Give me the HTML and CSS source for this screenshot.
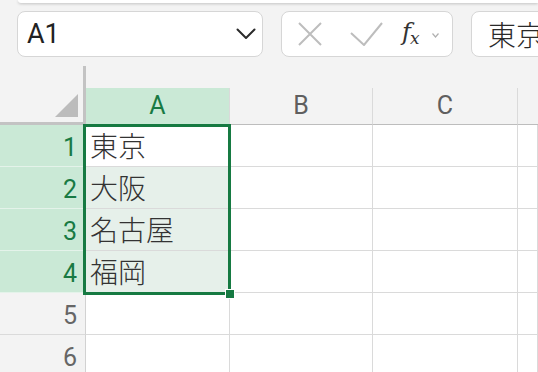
FILE: index.html
```html
<!DOCTYPE html>
<html lang="ja">
<head>
    <meta charset="UTF-8">
    <meta name="viewport" content="width=device-width, initial-scale=1.0">
    <title>Sheet</title>
    <link rel="stylesheet" href="styles.css">
</head>
<body>

<div class="topbar"></div>

<div class="toolbar">
    <div class="namebox">
        <span>A1</span>
        <svg class="chev" width="20" height="12" viewBox="0 0 20 12"><path d="M1.5 1.5 L10 10 L18.5 1.5" fill="none" stroke="#2b2b2b" stroke-width="2" stroke-linecap="round" stroke-linejoin="round"/></svg>
    </div>
    <div class="fxgroup">
        <svg width="24" height="24" viewBox="0 0 24 24"><path d="M1 1 L23 23 M23 1 L1 23" stroke="#bdbdbd" stroke-width="2" fill="none"/></svg>
        <svg width="33" height="24" viewBox="0 0 33 24"><path d="M1 11 L14 23 L32 1" stroke="#bdbdbd" stroke-width="2" fill="none"/></svg>
        <span class="fx"><i>f</i><sub>x</sub></span>
        <svg width="7" height="5" viewBox="0 0 7 5"><path d="M0.5 0.5 L3.5 4 L6.5 0.5" stroke="#b0b0b0" stroke-width="1.2" fill="none"/></svg>
    </div>
    <div class="formula">東京</div>
</div>

<div class="sheet">
    <div class="corner">
        <svg width="23" height="23" viewBox="0 0 23 23"><polygon points="23,0 23,23 0,23" fill="#bcbcbc"/></svg>
    </div>
    <div class="col sel">A</div>
    <div class="col">B</div>
    <div class="col">C</div>
    <div class="col last"></div>

    <div class="rowh sel">1</div>
    <div class="cell">東京</div>
    <div class="cell"></div>
    <div class="cell"></div>
    <div class="cell"></div>

    <div class="rowh sel">2</div>
    <div class="cell sel">大阪</div>
    <div class="cell"></div>
    <div class="cell"></div>
    <div class="cell"></div>

    <div class="rowh sel">3</div>
    <div class="cell sel">名古屋</div>
    <div class="cell"></div>
    <div class="cell"></div>
    <div class="cell"></div>

    <div class="rowh sel">4</div>
    <div class="cell sel">福岡</div>
    <div class="cell"></div>
    <div class="cell"></div>
    <div class="cell"></div>

    <div class="rowh">5</div>
    <div class="cell"></div>
    <div class="cell"></div>
    <div class="cell"></div>
    <div class="cell"></div>

    <div class="rowh">6</div>
    <div class="cell"></div>
    <div class="cell"></div>
    <div class="cell"></div>
    <div class="cell"></div>

    <div class="selection"></div>
    <div class="handle"></div>
</div>

</body>
</html>
```

FILE: styles.css
```css
body {
    margin: 0;
    background-color: #f3f3f3;
    font-family: Roboto, "Liberation Sans", sans-serif;
    overflow: hidden;
    height: 372px;
}
.topbar {
    height: 3px;
    margin-left: 18px;
    background-color: white;
    border-bottom-left-radius: 10px;
    box-shadow: 0 1px 3px rgba(0, 0, 0, 0.2);
}
.toolbar {
    display: flex;
    gap: 18px;
    padding: 8px 0 0 17px;
    height: 46px;
}
.namebox,
.fxgroup,
.formula {
    box-sizing: border-box;
    height: 46px;
    background-color: white;
    border: 1.5px solid #d6d6d6;
    border-radius: 8px;
    display: flex;
    align-items: center;
}
.namebox {
    width: 246px;
    justify-content: space-between;
    padding: 0 6px 0 9px;
    font-size: 27px;
    color: #222;
}
.fxgroup {
    width: 172px;
    padding-left: 16px;
}
.fxgroup svg:nth-child(2) {
    margin-left: 28px;
}
.fx {
    margin-left: 19px;
    font-family: "DejaVu Serif", serif;
    color: #333;
    font-size: 24px;
    line-height: 1;
    margin-top: -2px;
}
.fx sub {
    font-size: 17px;
    font-style: italic;
    vertical-align: -4px;
    margin-left: -1px;
}
.fxgroup svg:last-child {
    margin-left: 13px;
    margin-top: 2px;
}
.formula {
    flex: 1;
    margin-right: -30px;
    padding-left: 16px;
    font-family: "Noto Sans CJK JP", sans-serif;
    font-weight: 300;
    font-size: 28px;
    color: #2a2a2a;
    overflow: hidden;
    white-space: nowrap;
}
.sheet {
    position: relative;
    margin-top: 9px;
    display: grid;
    grid-template-columns: 86px 144px 143px 145px 1fr;
    grid-template-rows: 59px repeat(6, 42px);
}
.sheet > div {
    box-sizing: border-box;
}
.corner {
    border-right: 3px solid #c3c3c3;
    border-bottom: 3px solid #c3c3c3;
    display: flex;
    justify-content: flex-end;
    align-items: flex-end;
    padding: 0 5px 5px 0;
}
.col {
    align-self: end;
    height: 37px;
    border-bottom: 1px solid #bdbdbd;
    border-right: 1px solid #dadada;
    text-align: center;
    line-height: 36px;
    font-size: 25px;
    color: #5f5f5f;
}
.col.last {
    border-right: none;
}
.col.sel {
    background-color: #cae9d6;
    color: #187a43;
}
.rowh {
    border-right: 1px solid #d2d2d2;
    border-bottom: 1px solid #dadada;
    text-align: right;
    padding-right: 8px;
    font-size: 25px;
    line-height: 45px;
    color: #666;
}
.rowh.sel {
    background-color: #cae9d6;
    border-bottom-color: #e4f3ea;
    color: #187a43;
}
.cell {
    background-color: white;
    border-right: 1px solid #dadada;
    border-bottom: 1px solid #dadada;
    padding-left: 4px;
    font-family: "Noto Sans CJK JP", sans-serif;
    font-weight: 300;
    font-size: 28px;
    line-height: 41px;
    color: #333;
}
.cell.sel {
    background-color: #e6f0ea;
}
.selection {
    position: absolute;
    left: 83px;
    top: 58px;
    width: 148px;
    height: 171px;
    border: 3px solid #167a42;
}
.handle {
    position: absolute;
    left: 225px;
    top: 223px;
    width: 10px;
    height: 10px;
    background-color: #167a42;
    border: 1px solid white;
}
```
